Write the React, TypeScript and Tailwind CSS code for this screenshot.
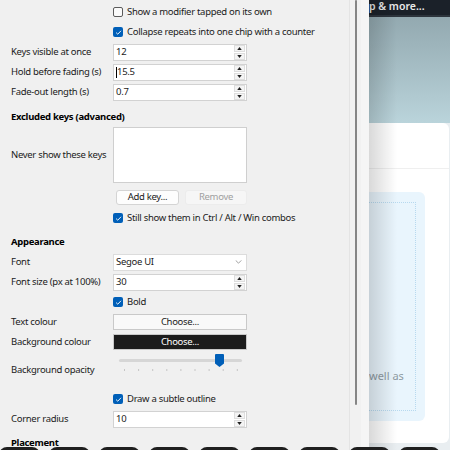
import React from 'react'

function Check({ checked, label, className = '' }: { checked?: boolean; label: string; className?: string }) {
  return (
    <div className={`flex h-[20px] items-center pl-[113px] ${className}`}>
      {checked ? (
        <span className="flex h-[10px] w-[10px] shrink-0 items-center justify-center rounded-[2px] bg-[#005fb8]">
          <svg viewBox="0 0 10 10" className="h-[9px] w-[9px]">
            <path d="M2.3 5.1 L4.2 6.9 L7.8 3.1" fill="none" stroke="#ffffff" strokeWidth="1" />
          </svg>
        </span>
      ) : (
        <span className="h-[10px] w-[10px] shrink-0 rounded-[2px] border border-[#5b5b5b] bg-[#fafafa]" />
      )}
      <span className="ml-[4px] whitespace-nowrap text-[#1b1b1b]">{label}</span>
    </div>
  )
}

function Row({ label, children, className = 'h-[20px]' }: { label: string; children: React.ReactNode; className?: string }) {
  return (
    <div className={`flex items-center ${className}`}>
      <div className="w-[113px] whitespace-nowrap pl-[11px] text-[#1b1b1b]">{label}</div>
      <div className="w-[134px]">{children}</div>
    </div>
  )
}

function Arrow({ up }: { up?: boolean }) {
  return (
    <span className="flex h-[7px] w-[11px] items-center justify-center border border-[#dedede] bg-[#f4f4f4]">
      <svg viewBox="0 0 6 4" className="h-[3px] w-[5px]">
        <path d={up ? 'M0 4 L3 0 L6 4 Z' : 'M0 0 L3 4 L6 0 Z'} fill="#222222" />
      </svg>
    </span>
  )
}

function Spin({ value, caret }: { value: string; caret?: boolean }) {
  return (
    <div className="flex h-[17px] items-center border border-[#d2d2d2] bg-white pl-[2px]">
      {caret && <span className="h-[11px] w-px bg-black" />}
      <span className="text-[#1b1b1b]">{value}</span>
      <div className="ml-auto mr-[1px] flex flex-col gap-px">
        <Arrow up />
        <Arrow />
      </div>
    </div>
  )
}

function Heading({ children, className = 'h-[25px] pt-[5px]' }: { children: React.ReactNode; className?: string }) {
  return (
    <div className={`flex items-center pl-[11px] font-bold text-black ${className}`}>{children}</div>
  )
}

function Slider() {
  const ticks = Array.from({ length: 9 }, (_, i) => 11 + i * 14.1)
  return (
    <svg viewBox="0 0 134 37" className="h-[37px] w-[134px]">
      <rect x="6" y="7" width="123" height="3" rx="1.5" fill="#d6d6d6" />
      {ticks.map((x) => (
        <rect key={x} x={x} y="17.5" width="1" height="1" fill="#9a9a9a" />
      ))}
      <path d="M102 3 Q102 2 103 2 L110 2 Q111 2 111 3 L111 11.5 L106.5 15 L102 11.5 Z" fill="#005fb8" />
    </svg>
  )
}

function Settings() {
  return (
    <div className="flex h-[450px] w-[369px] shrink-0 bg-[#f0f0f0] text-[9.5px] tracking-[-0.3px]">
      <div className="w-[349px] pt-[2px]">
        <Check label="Show a modifier tapped on its own" />
        <Check checked label="Collapse repeats into one chip with a counter" />
        <Row label="Keys visible at once">
          <Spin value="12" />
        </Row>
        <Row label="Hold before fading (s)">
          <Spin value="15.5" caret />
        </Row>
        <Row label="Fade-out length (s)">
          <Spin value="0.7" />
        </Row>

        <Heading>Excluded keys (advanced)</Heading>
        <Row label="Never show these keys" className="h-[56px]">
          <div className="h-[56px] border border-[#cfcfcf] bg-white" />
        </Row>
        <div className="mt-[7px] flex h-[15px] pl-[116px]">
          <button className="flex w-[63px] items-center justify-center rounded-[3px] border border-[#d4d4d4] bg-[#fdfdfd] text-[#1b1b1b]">
            Add key...
          </button>
          <button className="ml-[6px] flex w-[62px] items-center justify-center rounded-[3px] border border-[#ececec] bg-[#f6f6f6] text-[#9f9f9f]">
            Remove
          </button>
        </div>
        <Check checked label="Still show them in Ctrl / Alt / Win combos" className="mt-[3px]" />

        <Heading className="h-[24px] pt-[5px]">Appearance</Heading>
        <Row label="Font">
          <div className="flex h-[17px] items-center border border-[#dcdcdc] bg-white pl-[2px] pr-[4px]">
            <span className="text-[#1b1b1b]">Segoe UI</span>
            <svg viewBox="0 0 8 5" className="ml-auto h-[4px] w-[7px]">
              <path d="M0.5 0.5 L4 4 L7.5 0.5" fill="none" stroke="#6b6b6b" strokeWidth="0.8" />
            </svg>
          </div>
        </Row>
        <Row label="Font size (px at 100%)">
          <Spin value="30" />
        </Row>
        <Check checked label="Bold" />
        <Row label="Text colour">
          <div className="flex h-[16px] items-center justify-center border border-[#c9c9c9] bg-[#f9f9f9] text-[#1b1b1b]">
            Choose...
          </div>
        </Row>
        <Row label="Background colour">
          <div className="flex h-[16px] items-center justify-center border border-[#c9c9c9] bg-[#1c1c1c] text-white">
            Choose...
          </div>
        </Row>
        <Row label="Background opacity" className="h-[37px]">
          <Slider />
        </Row>
        <Check checked label="Draw a subtle outline" />
        <Row label="Corner radius">
          <Spin value="10" />
        </Row>
        <Heading className="h-[20px] pt-[8px]">Placement</Heading>
      </div>
      <div className="flex w-[12px] justify-center border-l border-[#e4e4e4] bg-[#f1f1f1]">
        <div className="h-[405px] w-[2px] rounded-full bg-[#858585]" />
      </div>
      <div className="w-[8px] bg-[#f5f5f5]" />
    </div>
  )
}

function Page() {
  return (
    <div className="relative flex h-[450px] flex-1 flex-col overflow-hidden bg-[#e9eef1]">
      <div className="h-[15px] overflow-hidden bg-[#1b2129]">
        <div className="whitespace-nowrap text-[10.5px] font-semibold leading-[12px] text-[#eaeaea]">p &amp; more...</div>
      </div>
      <div className="h-[2px] bg-[#2d343c]" />
      <div className="h-[106px] bg-gradient-to-b from-[#93a9b0] to-[#bad4db]" />
      <div className="mr-[1px] flex h-[320px] flex-col rounded-tr-[6px] rounded-br-[6px] bg-white">
        <div className="h-[46px] border-b border-[#efefef]" />
        <div className="mt-[23px] h-[229px] w-[56px] rounded-br-[6px] rounded-tr-[6px] bg-[#e9f5fd] pb-[10px] pr-[9px] pt-[10px]">
          <div className="flex h-full flex-col justify-end border-b border-r border-t border-dotted border-[#b7d9ef] pb-[27px]">
            <span className="whitespace-nowrap text-[11px] leading-[14px] text-[#8e9aa2]">well as</span>
          </div>
        </div>
      </div>
      <div className="pointer-events-none absolute bottom-0 left-0 top-0 w-[28px] bg-gradient-to-r from-black/15 to-transparent" />
    </div>
  )
}

export default function App() {
  const chips = [0, 1, 2, 3, 4, 5, 6, 7, 8]
  return (
    <div className="relative h-[450px] w-[450px] overflow-hidden font-['Noto_Sans',sans-serif]">
      <div className="flex h-full">
        <Settings />
        <Page />
      </div>
      <div className="absolute left-[-1px] top-[447px] flex gap-[9px]">
        {chips.map((c) => (
          <div key={c} className="h-[20px] w-[41px] rounded-[8px] bg-[#1f1f1f]" />
        ))}
      </div>
    </div>
  )
}
